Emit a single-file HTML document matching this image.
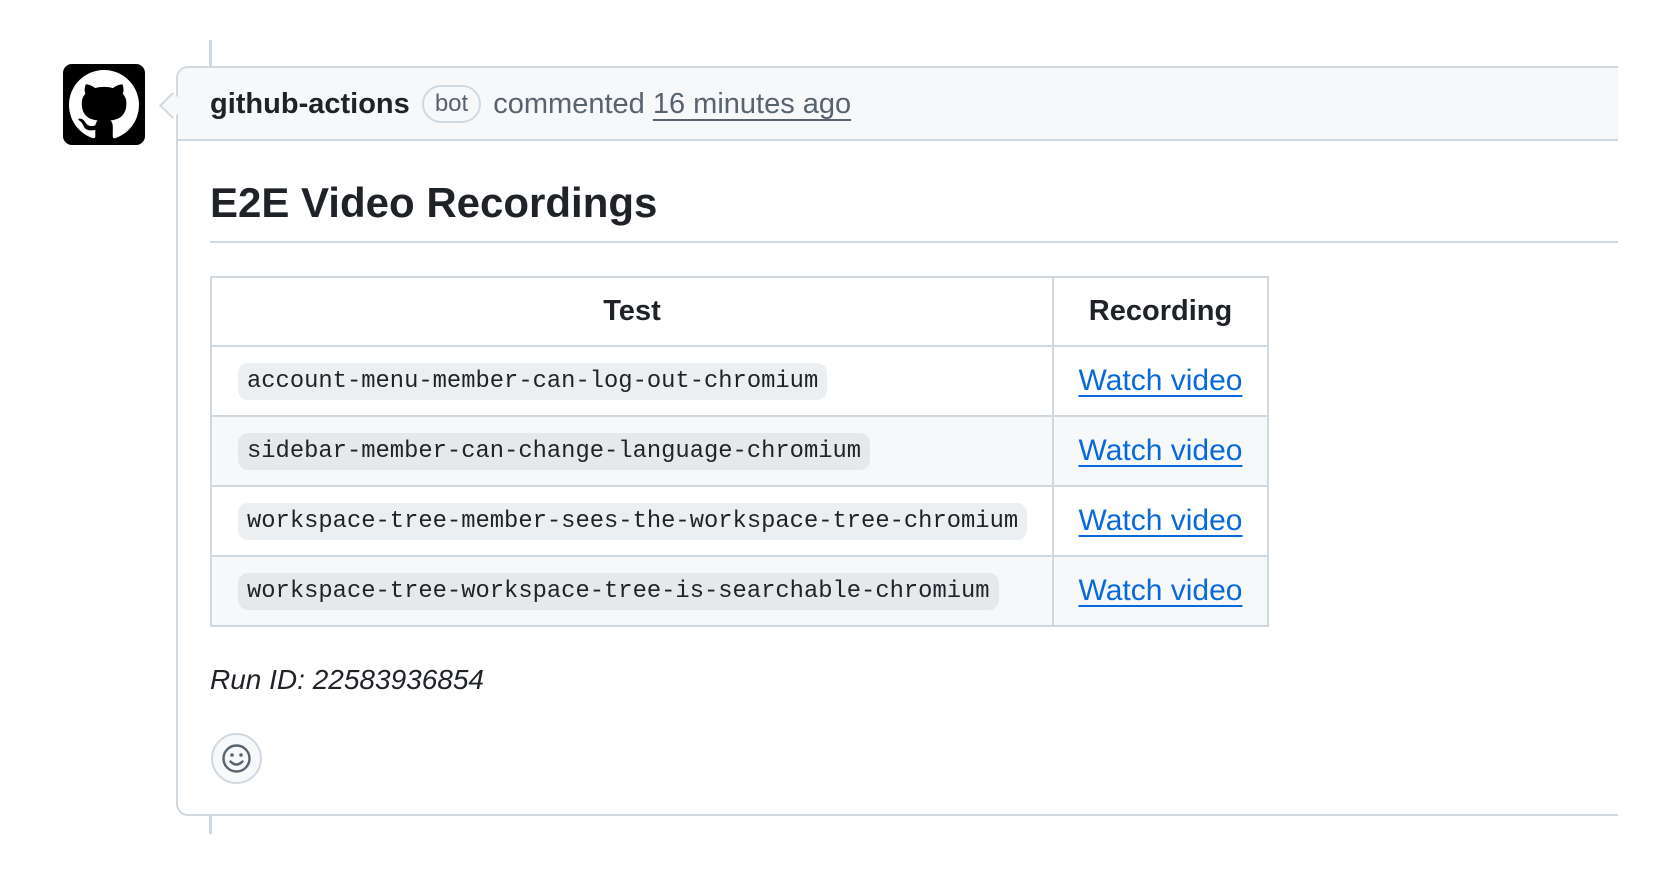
<!DOCTYPE html>
<html><head><meta charset="utf-8"><style>
*{box-sizing:border-box;margin:0;padding:0}
body{width:1658px;height:870px;background:#fff;position:relative;overflow:hidden;font-family:"Liberation Sans",sans-serif;color:#1f2328}
.abs{position:absolute}
.tl{position:absolute;left:209px;width:3px;background:#d1d9e0}
.box{left:176px;top:66px;width:1442px;height:750px;border:2px solid #d1d9e0;border-right:none;border-radius:12px 0 0 12px}
.hdr{left:178px;top:68px;width:1440px;height:73px;background:#f6f8fa;border-bottom:2px solid #d1d9e0;border-radius:10px 0 0 0}
.ptr{left:163px;top:96px;width:19px;height:19px;background:#f6f8fa;border-left:2px solid #d1d9e0;border-bottom:2px solid #d1d9e0;transform:rotate(45deg)}
.htext{left:210px;top:84px;font-size:29px;line-height:40px;white-space:nowrap;color:#59636e}
.htext b{color:#1f2328}
.badge{display:inline-block;border:2px solid #d1d9e0;border-radius:20px;padding:0 11px;font-size:24px;line-height:34px;margin:0 4px;vertical-align:2px}
.htext u{text-decoration-thickness:2px;text-underline-offset:6px}
h2{position:absolute;left:210px;top:175px;font-size:42px;font-weight:600;line-height:56px}
.hr{left:210px;top:241px;width:1408px;height:2px;background:#d1d9e0}
table{position:absolute;left:210px;top:276px;border-collapse:collapse}
td,th{border:2px solid #d1d9e0;height:70px}
th{height:69px;font-size:29px;font-weight:700}
tr.e td{background:#f6f8fa}
td.c{width:842px;padding-left:26px}
td.r{width:215px;text-align:center}
code{font-family:"Liberation Mono",monospace;font-size:23.8px;background:#eceff2;border-radius:10px;padding:5px 9px}
tr.e code{background:#e6e9ec}
a{color:#0969da;font-size:30px;text-decoration:underline;text-decoration-thickness:2px;text-underline-offset:5px}
.run{left:210px;top:660px;font-size:28px;font-style:italic;line-height:40px}
.smile{left:211px;top:733px;width:51px;height:51px;border-radius:50%;border:2px solid #d1d9e0;background:#f6f8fa}
</style></head><body>
<div class="tl" style="top:40px;height:30px"></div>
<div class="tl" style="top:814px;height:20px"></div>
<div class="abs" style="left:63px;top:64px;width:82px;height:81px;background:#000;border-radius:9px">
<svg width="70" height="70" viewBox="0 0 16 16" style="position:absolute;left:6px;top:6px"><path fill="#fff" d="M8 0C3.58 0 0 3.58 0 8c0 3.54 2.29 6.53 5.470 7.59.4.07.55-.17.55-.38 0-.19-.01-.82-.01-1.49-2.01.37-2.530-.49-2.690-.94-.09-.23-.48-.94-.82-1.13-.28-.15-.68-.52-.01-.53.63-.01 1.08.58 1.23.82.72 1.21 1.87.87 2.33.66.07-.52.28-.87.51-1.07-1.78-.2-3.64-.89-3.64-3.95 0-.87.31-1.59.82-2.150-.08-.2-.36-1.02.08-2.12 0 0 .67-.21 2.2.82.64-.18 1.32-.27 2-.27.68 0 1.36.09 2 .27 1.53-1.04 2.2-.82 2.2-.82.44 1.1.16 1.92.08 2.12.51.56.82 1.27.82 2.15 0 3.07-1.87 3.75-3.65 3.95.29.25.54.73.54 1.48 0 1.07-.01 1.93-.01 2.2 0 .21.15.46.55.38A8.013 8.013 0 0016 8c0-4.42-3.58-8-8-8z"/></svg></div>
<div class="abs box"></div>
<div class="abs hdr"></div>
<div class="abs ptr"></div>
<div class="abs htext"><b>github-actions</b> <span class="badge">bot</span> commented <u>16 minutes ago</u></div>
<h2>E2E Video Recordings</h2>
<div class="abs hr"></div>
<table>
<tr><th>Test</th><th>Recording</th></tr>
<tr><td class="c"><code>account-menu-member-can-log-out-chromium</code></td><td class="r"><a>Watch video</a></td></tr>
<tr class="e"><td class="c"><code>sidebar-member-can-change-language-chromium</code></td><td class="r"><a>Watch video</a></td></tr>
<tr><td class="c"><code>workspace-tree-member-sees-the-workspace-tree-chromium</code></td><td class="r"><a>Watch video</a></td></tr>
<tr class="e"><td class="c"><code>workspace-tree-workspace-tree-is-searchable-chromium</code></td><td class="r"><a>Watch video</a></td></tr>
</table>
<div class="abs run">Run ID: 22583936854</div>
<div class="abs smile"><svg width="47" height="47" viewBox="0 0 47 47"><circle cx="23.5" cy="23.5" r="13" fill="none" stroke="#59636e" stroke-width="2.4"/><circle cx="19" cy="20" r="1.8" fill="#59636e"/><circle cx="28" cy="20" r="1.8" fill="#59636e"/><path d="M17.5 26.5q6 6 12 0" fill="none" stroke="#59636e" stroke-width="2.4" stroke-linecap="round"/></svg></div>
</body></html>
